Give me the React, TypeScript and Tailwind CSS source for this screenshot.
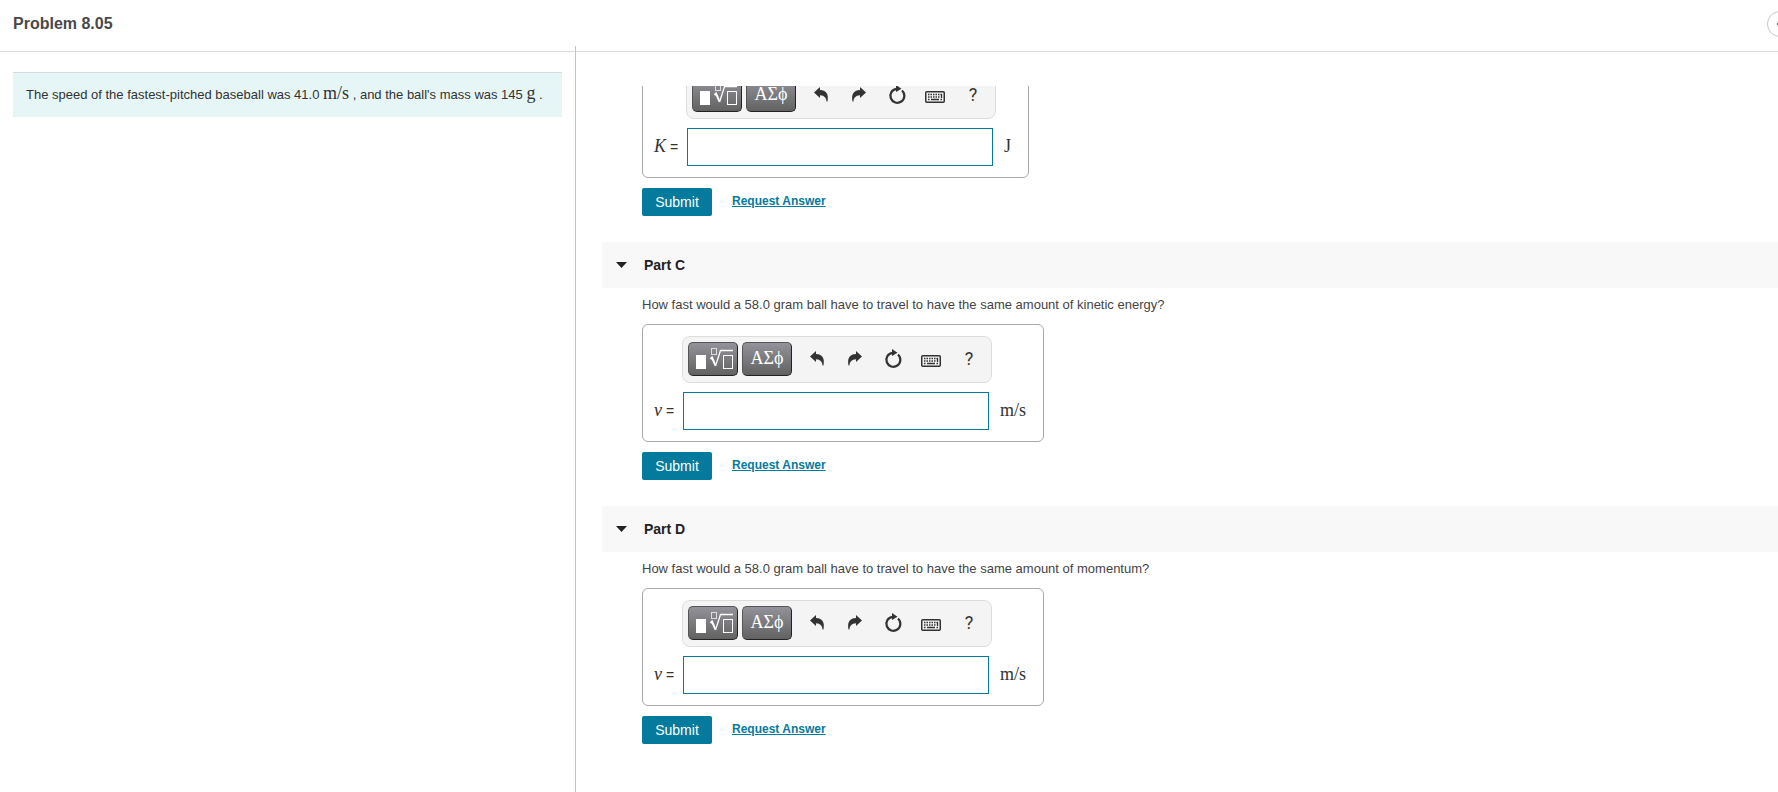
import { ChevronLeft } from "lucide-react";

const parts = [
  {
    id: "b",
    title: "",
    question: "",
    symbol: "K",
    unit: "J",
  },
  {
    id: "c",
    title: "Part C",
    question: "How fast would a 58.0 gram ball have to travel to have the same amount of kinetic energy?",
    symbol: "v",
    unit: "m/s",
  },
  {
    id: "d",
    title: "Part D",
    question: "How fast would a 58.0 gram ball have to travel to have the same amount of momentum?",
    symbol: "v",
    unit: "m/s",
  },
];

function TemplateIcon() {
  return (
    <svg width="40" height="24" viewBox="0 0 40 24" fill="none" stroke="#fff">
      <rect x="3" y="8" width="10" height="14" fill="#fff" stroke="none" />
      <rect x="18.500" y="1.500" width="5" height="6" stroke="#ddd" />
      <path d="M17.500 12l1.500-1.500 3.500 8" strokeWidth="2" />
      <path d="M22.500 19L27.500 3.500H40" strokeWidth="1.300" />
      <rect x="30.500" y="8.500" width="9" height="13" />
    </svg>
  );
}

function UndoIcon() {
  return (
    <svg width="16" height="16" viewBox="0 0 16 16" fill="#333">
      <path d="M1 5.500L7 0v3c6 0 9 4 7.500 11.500h-1C13.500 11 11.500 8.500 7 8.200V11z" />
    </svg>
  );
}

function RedoIcon() {
  return (
    <svg width="16" height="16" viewBox="0 0 16 16" fill="#333">
      <path d="M15 5.500L9 0v3C3 3 0 7 1.500 14.500h1C2.500 11 4.500 8.500 9 8.200V11z" />
    </svg>
  );
}

function ResetIcon() {
  return (
    <svg width="18" height="20" viewBox="0 0 18 20" fill="none">
      <path d="M14 5.500A7 7 0 1 1 8.500 3.800" stroke="#333" strokeWidth="2.200" />
      <path d="M8 0l5.500 3.800L8 7z" fill="#333" />
    </svg>
  );
}

function KeyboardIcon() {
  return (
    <svg width="20" height="12" viewBox="0 0 20 12" fill="none" stroke="#333">
      <rect x="0.750" y="0.750" width="18.500" height="10.500" rx="1" strokeWidth="1.500" />
      <path d="M3 3.500h14M3 6h12" strokeWidth="1.500" strokeDasharray="1.500 1" />
      <path d="M16.500 3v4M3 8.500h1.500M6 8.500h8M15.500 8.500H17" strokeWidth="1.300" />
    </svg>
  );
}

function Toolbar() {
  const dark =
    "flex h-[34px] w-[50px] items-center justify-center rounded-[5px] border border-[#555] border-r-[#222] border-b-[#222] bg-linear-to-b from-[#94929a] to-[#626262] text-white";
  const plain = "flex h-[34px] w-[38px] items-center justify-center text-[#333]";
  return (
    <div className="flex h-[47px] w-[310px] items-start rounded-lg border border-[#dcdcdc] bg-[#f4f4f4] pl-[5px] pt-[5px]">
      <button aria-label="Templates" className={dark}>
        <TemplateIcon />
      </button>
      <button aria-label="Symbols" className={`${dark} mx-1 pb-0.5 font-['Liberation_Serif',serif] text-lg leading-none`}>
        ΑΣϕ
      </button>
      <div className="flex pl-0.5">
        <button aria-label="Undo" className={plain}>
          <UndoIcon />
        </button>
        <button aria-label="Redo" className={plain}>
          <RedoIcon />
        </button>
        <button aria-label="Reset" className={plain}>
          <ResetIcon />
        </button>
        <button aria-label="Keyboard shortcuts" className={`${plain} pt-1`}>
          <KeyboardIcon />
        </button>
        <button aria-label="Help" className={`${plain} font-[Roboto,sans-serif] text-lg leading-none`}>
          ?
        </button>
      </div>
    </div>
  );
}

function AnswerForm({ id, symbol, unit }: { id: string; symbol: string; unit: string }) {
  return (
    <div className="ml-10">
      <div className="inline-grid h-[118px] grid-cols-[auto_auto_auto] content-start items-center rounded-md border border-[#a9a9a9] pl-[11px] pr-[17px] pt-[11px] align-top">
        <div className="col-start-2">
          <Toolbar />
        </div>
        <label htmlFor={id} className="col-start-1 mt-1.5 pr-2 text-sm text-[#333]">
          <i className="font-['Liberation_Serif',serif] text-lg">{symbol}</i> =
        </label>
        <input id={id} className="ml-px mt-[9px] h-[38px] w-[306px] border border-[#047a9c] px-2 outline-none" />
        <span className="mt-1.5 pl-2 font-['Liberation_Serif',serif] text-lg text-[#333]">{unit}</span>
      </div>
      <div className="mt-[10px] flex items-center gap-5">
        <button className="h-7 w-[70px] rounded-xs bg-[#047a9c] text-sm text-white">Submit</button>
        <a href="#" className="pb-0.5 text-xs font-bold text-[#047a9c] underline">
          Request Answer
        </a>
      </div>
    </div>
  );
}

export default function App() {
  return (
    <div className="flex h-screen flex-col overflow-hidden bg-white font-['Liberation_Sans',Arial,sans-serif] text-[#333]">
      <header className="flex h-[52px] shrink-0 items-center justify-between overflow-hidden border-b border-[#dcdcdc] pb-1 pl-[13px]">
        <h1 className="text-base font-bold text-[#484848]">Problem 8.05</h1>
        <button
          aria-label="Previous"
          className="-mr-[15px] flex size-[26px] shrink-0 items-center justify-center rounded-full border border-[#c7c7c7]"
        >
          <ChevronLeft size={18} />
        </button>
      </header>

      <main className="relative -mt-[6px] flex min-h-0 grow">
        <aside className="w-[576px] shrink-0 border-r border-[#bcc6cf] pl-[13px] pr-[13px] pt-[26px]">
          <p className="h-[45px] border-t border-[#d5dcdc] bg-[#e6f6f6] pl-[13px] text-[13px] leading-[44px]">
            The speed of the fastest-pitched baseball was 41.0{" "}
            <span className="font-['Liberation_Serif',serif] text-lg leading-none">m/s</span> , and the ball's mass was 145{" "}
            <span className="font-['Liberation_Serif',serif] text-lg leading-none">g</span> .
          </p>
        </aside>

        <div className="grow pl-[26px] pt-10">
          <div className="h-full overflow-hidden">
            {/* scrolled down past the start of the first part */}
            <div className="-mt-[26px]">
              {parts.map((part) => (
                <section key={part.id} className="mb-[26px]">
                  {part.title && (
                    <>
                      <h2 className="flex h-[46px] items-center bg-[#f8f8f8] pl-[14px] text-sm font-bold text-[#222]">
                        <svg width="11" height="6" viewBox="0 0 11 6" className="mr-[17px]" fill="#222">
                          <path d="M0 0h11L5.500 6z" />
                        </svg>
                        {part.title}
                      </h2>
                      <p className="ml-10 h-9 pt-[7px] text-[13px] leading-5 text-[#444]">{part.question}</p>
                    </>
                  )}
                  <AnswerForm id={`answer-${part.id}`} symbol={part.symbol} unit={part.unit} />
                </section>
              ))}
            </div>
          </div>
        </div>
      </main>
    </div>
  );
}
